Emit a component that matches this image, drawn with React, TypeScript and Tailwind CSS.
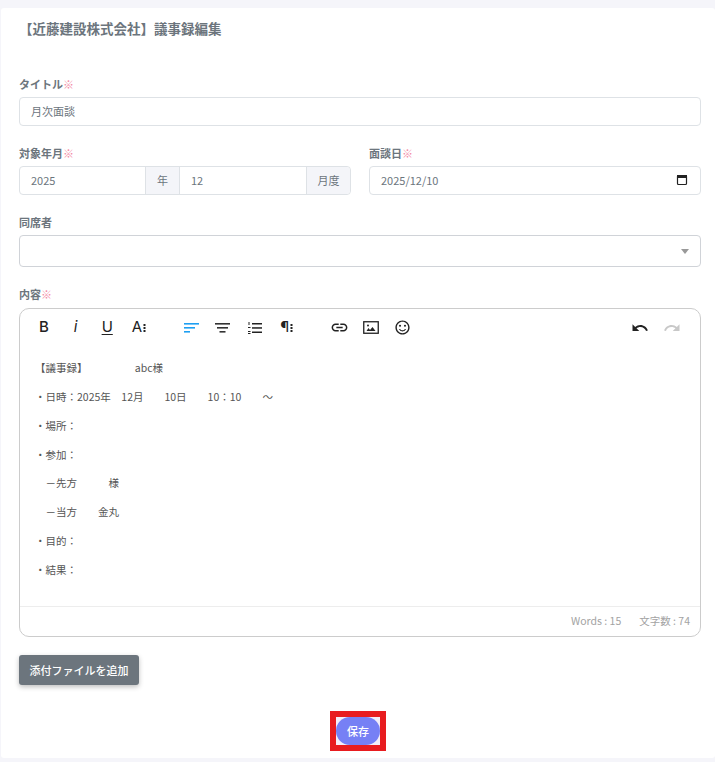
import React from 'react';
import { MdLink, MdOutlineSentimentSatisfied, MdUndo, MdRedo } from 'react-icons/md';

const required = <span className="text-[#f38aa5] font-normal">※</span>;

function Label(params: { text: string; req?: boolean }) {
    return (
        <p className="h-[19px] mb-[3px] text-[11px] leading-[19px] font-bold text-[#6c757d]">
            {params.text}{params.req && required}
        </p>
    );
}

function Dots() {
    return (
        <svg width="3" height="10" viewBox="0 0 3 10" fill="#222222" className="ml-[1px]">
            <rect x="0.5" y="1" width="2" height="2" />
            <rect x="0.5" y="4" width="2" height="2" />
            <rect x="0.5" y="7" width="2" height="2" />
        </svg>
    );
}

function AlignIcon(params: { center?: boolean; active?: boolean }) {
    const color = params.active ? '#1e9ff2' : '#333333';
    return (
        <svg width="16" height="12" viewBox="0 0 16 12" fill={color}>
            <rect x="0" y="1" width="15" height="1.6" />
            <rect x={params.center ? 2 : 0} y="5" width="11" height="1.6" />
            <rect x={params.center ? 4.5 : 0} y="9" width="6" height="1.6" />
        </svg>
    );
}

function Tool(params: { children: React.ReactNode; className?: string }) {
    return (
        <span className={`flex w-[31.7px] h-[20px] items-center justify-center text-[#222222] ${params.className ?? ''}`}>
            {params.children}
        </span>
    );
}

const lines = [
    '【議事録】\u3000\u3000\u3000\u3000\u3000abc様',
    '・日時：2025年\u300012月\u3000\u300010日\u3000\u300010：10\u3000\u3000～',
    '・場所：',
    '・参加：',
    '\u3000－先方\u3000\u3000\u3000様',
    '\u3000－当方\u3000\u3000金丸',
    '・目的：',
    '・結果：',
];

export default function App() {
    return (
        <div className="h-[762px] overflow-hidden bg-[#f5f5fa] pt-[8px] pl-[1px] font-['Noto_Sans_CJK_JP','Noto_Sans',sans-serif]">
            <main className="h-[750px] bg-white pl-[18px] pr-[14px] rounded-[3px]">
                <h1 className="h-[67px] pt-[9px] text-[13.5px] leading-[22px] font-bold text-[#6c757d]">【近藤建設株式会社】議事録編集</h1>

                <Label text="タイトル" req />
                <div className="h-[29px] flex items-center px-[11px] border border-[#dee2e6] rounded-[4px] text-[11px] text-[#6c757d]">月次面談</div>

                <div className="flex gap-[18px] mt-[18px]">
                    <div className="basis-1/2">
                        <Label text="対象年月" req />
                        <div className="flex h-[29px] border border-[#dee2e6] rounded-[4px] text-[11px] text-[#6c757d]">
                            <div className="w-[125px] flex items-center px-[11px]">2025</div>
                            <div className="w-[35px] flex items-center justify-center bg-[#f4f5f9] border-x border-[#dee2e6]">年</div>
                            <div className="w-[126px] flex items-center px-[11px]">12</div>
                            <div className="flex-1 flex items-center justify-center bg-[#f4f5f9] border-l border-[#dee2e6] rounded-r-[4px]">月度</div>
                        </div>
                    </div>
                    <div className="basis-1/2">
                        <Label text="面談日" req />
                        <div className="flex h-[29px] items-center justify-between pl-[11px] pr-[12px] border border-[#dee2e6] rounded-[4px] text-[11px] text-[#6c757d]">
                            2025/12/10
                            <svg width="12" height="12" viewBox="0 0 12 12" fill="none" stroke="#222222" className="mt-[-2px]">
                                <rect x="1.5" y="1.5" width="9" height="9" rx="1" strokeWidth="1.2" />
                                <rect x="1.5" y="1.5" width="9" height="2" fill="#222222" strokeWidth="1" />
                            </svg>
                        </div>
                    </div>
                </div>

                <div className="mt-[18px]">
                    <Label text="同席者" />
                    <div className="flex h-[32px] items-center justify-end pr-[11px] border border-[#d0d3d8] rounded-[4px]">
                        <span className="w-0 h-0 border-x-[4px] border-x-transparent border-t-[5px] border-t-[#999999]" />
                    </div>
                </div>

                <div className="mt-[18px]">
                    <Label text="内容" req />
                    <div className="h-[329px] mt-[4px] flex flex-col border border-[#cccccc] rounded-[10px]">
                        <div className="flex h-[37px] items-center pl-[8px] pr-[12px]">
                            <Tool className="text-[15px] font-medium font-['Inter',sans-serif]">B</Tool>
                            <Tool className="text-[15px] italic font-['Inter',sans-serif]">i</Tool>
                            <Tool className="text-[15px] underline underline-offset-2 font-['Inter',sans-serif]">U</Tool>
                            <Tool className="text-[15px] font-['Inter',sans-serif]">A<Dots /></Tool>
                            <span className="w-[21px]" />
                            <Tool><AlignIcon active /></Tool>
                            <Tool><AlignIcon center /></Tool>
                            <Tool>
                                <svg width="16" height="14" viewBox="0 0 16 14" fill="#222222">
                                    <rect x="5" y="2" width="10" height="1.5" />
                                    <rect x="5" y="6.2" width="10" height="1.5" />
                                    <rect x="5" y="10.5" width="10" height="1.5" />
                                    <rect x="1.5" y="1" width="1" height="3" />
                                    <rect x="1" y="6" width="2.5" height="1" />
                                    <rect x="1" y="10" width="2.5" height="1" />
                                    <rect x="1" y="12" width="2.5" height="1" />
                                </svg>
                            </Tool>
                            <Tool className="text-[15px] font-['Inter',sans-serif]">¶<Dots /></Tool>
                            <span className="w-[21px]" />
                            <Tool><MdLink size={19} /></Tool>
                            <Tool>
                                <svg width="16" height="13" viewBox="0 0 16 13" fill="none">
                                    <rect x="0.75" y="0.75" width="14.5" height="11.5" stroke="#222222" strokeWidth="1.3" />
                                    <path d="M3.5 10 L5.5 7 L7 9 L9.5 6 L12.5 10 Z" fill="#222222" />
                                    <circle cx="5" cy="4.5" r="1" fill="#222222" />
                                </svg>
                            </Tool>
                            <Tool><MdOutlineSentimentSatisfied size={17} /></Tool>
                            <span className="flex-1" />
                            <Tool><MdUndo size={18} /></Tool>
                            <Tool className="text-[#c8c8c8]"><MdRedo size={18} /></Tool>
                        </div>
                        <div className="flex-1 pl-[15px] pr-[16px] pt-[12px] text-[10.5px] leading-[19px] text-[#555555]">
                            {lines.map((line) => (
                                <p key={line} className="mb-[9.85px] whitespace-pre">{line}</p>
                            ))}
                        </div>
                        <div className="flex h-[30px] items-center justify-end gap-[18px] px-[10px] pb-[2px] border-t border-[#ededed] text-[10.5px] text-[#a3a3a3]">
                            <span>Words : 15</span>
                            <span>文字数 : 74</span>
                        </div>
                    </div>
                </div>

                <button className="block w-[120px] h-[30px] mt-[18px] bg-[#6c757d] rounded-[3px] text-[11px] font-medium text-white shadow-[0_2px_5px_rgba(0,0,0,0.25)]">添付ファイルを追加</button>

                <div className="flex justify-center mt-[26px]">
                    <div className="ml-[-4px] border-[6px] border-[#e81c1f] bg-[#f3eef8]">
                        <button className="block w-[44px] h-[28px] rounded-full bg-[#7680f5] text-[11px] font-medium text-white">保存</button>
                    </div>
                </div>
            </main>
        </div>
    );
}
